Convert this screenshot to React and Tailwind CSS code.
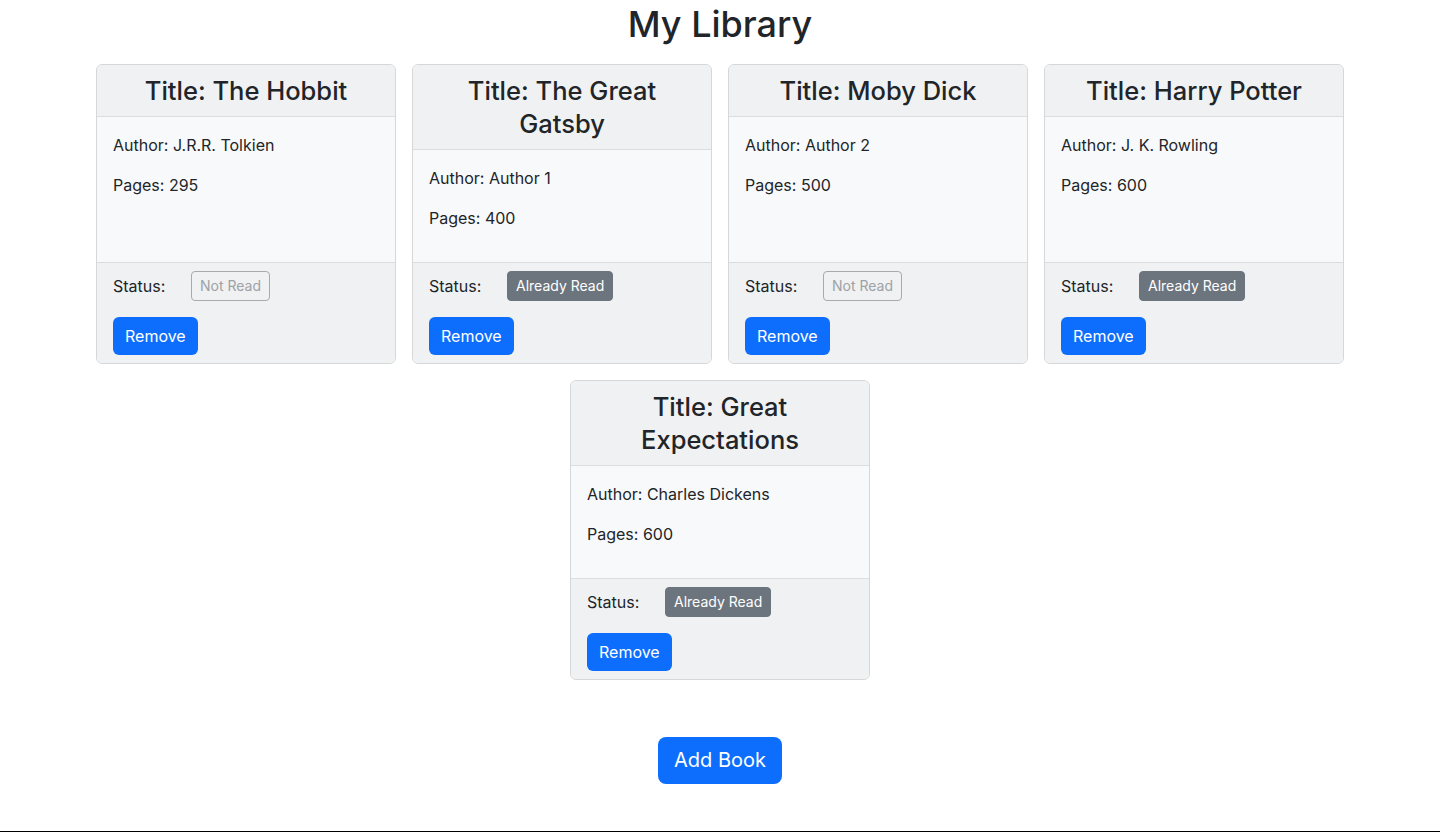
const books = [
  { title: "The Hobbit", author: "J.R.R. Tolkien", pages: 295, read: false },
  { title: "The Great Gatsby", author: "Author 1", pages: 400, read: true },
  { title: "Moby Dick", author: "Author 2", pages: 500, read: false },
  { title: "Harry Potter", author: "J. K. Rowling", pages: 600, read: true },
  { title: "Great Expectations", author: "Charles Dickens", pages: 600, read: true },
];

function BookCard({ book }) {
  return (
    <div className="flex w-[300px] flex-col overflow-hidden rounded-md border border-[#d6d7d8] bg-[#f8f9fa]">
      <div className="border-b border-[#dcdddf] bg-[#f0f1f2] px-4 py-[9px] text-center text-[25.5px] leading-[33px] font-medium">
        Title: {book.title}
      </div>
      <div className="flex-1 p-4 text-base leading-6">
        <p className="mb-4">Author: {book.author}</p>
        <p className="mb-4">Pages: {book.pages}</p>
      </div>
      <div className="border-t border-[#dcdddf] bg-[#f0f1f2] px-4 py-[8px]">
        <div className="flex items-center">
          <span className="w-[78px] text-base">Status:</span>
          {book.read ? (
            <span className="rounded border border-[#6c757d] bg-[#6c757d] px-2 py-[4px] text-sm leading-[20px] text-white">
              Already Read
            </span>
          ) : (
            <span className="rounded border border-[#a6abb0] px-2 py-[4px] text-sm leading-[20px] text-[#9ea2a6]">
              Not Read
            </span>
          )}
        </div>
        <button className="mt-4 rounded-md bg-[#0d6efd] px-3 py-[6px] text-base leading-[26px] text-white">
          Remove
        </button>
      </div>
    </div>
  );
}

export default function App() {
  return (
    <div className="min-h-[833px] bg-white text-[#212529]" style={{ fontFamily: "Inter, 'Liberation Sans', sans-serif" }}>
      <div className="flex flex-col items-center">
        <h1 className="mb-4 h-[48px] text-[36px] leading-[48px] font-medium">My Library</h1>
        <div className="flex w-full flex-wrap justify-center gap-4">
          {books.map((b) => (
            <BookCard key={b.title} book={b} />
          ))}
        </div>
        <button className="mt-[57px] rounded-lg bg-[#0d6efd] px-4 py-2 text-xl leading-[31px] text-white">
          Add Book
        </button>
      </div>
      <div className="mt-[47px] border-t border-black"></div>
    </div>
  );
}
